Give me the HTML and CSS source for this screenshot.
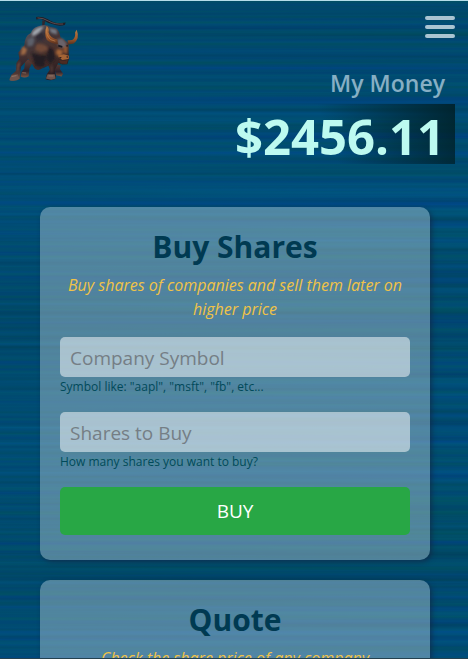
FILE: index.html
```html
<!DOCTYPE html>
<html lang="en">
<head>
  <meta charset="utf-8">
  <meta name="viewport" content="width=device-width, initial-scale=1">
  <title>My Money</title>
  <link rel="stylesheet" href="styles.css">
</head>
<body>
  <div class="page">
    <header class="topbar">
      <a class="logo" href="#" aria-label="Home">
        <svg viewBox="20 44 222 206" aria-hidden="true">
          <defs>
            <linearGradient id="hide" x1="0" y1="0" x2="0.5" y2="1">
              <stop offset="0" stop-color="#6b6f78"/>
              <stop offset="0.3" stop-color="#40373d"/>
              <stop offset="0.65" stop-color="#4c3129"/>
              <stop offset="1" stop-color="#241b22"/>
            </linearGradient>
            <linearGradient id="horn" x1="0" y1="0" x2="0" y2="1">
              <stop offset="0" stop-color="#b67a45"/>
              <stop offset="0.6" stop-color="#a0592b"/>
              <stop offset="1" stop-color="#57301f"/>
            </linearGradient>
            <linearGradient id="leg" x1="0" y1="0" x2="0" y2="1">
              <stop offset="0" stop-color="#5d3e35"/>
              <stop offset="0.65" stop-color="#2c222b"/>
              <stop offset="1" stop-color="#7d5641"/>
            </linearGradient>
            <filter id="soft"><feGaussianBlur stdDeviation="3"/></filter>
          </defs>
          <path d="M107 48Q126 46 143 55Q162 68 184 67L198 65L195 73Q178 79 158 71Q141 66 130 58Q120 53 107 56Z" fill="#211d25"/>
          <path d="M111 51Q129 51 145 61Q164 72 190 70" fill="none" stroke="#75666a" stroke-width="2"/>
          <path d="M126 58L135 61L132 75L125 78Z" fill="#30272e"/>
          <path d="M74 178L98 184L86 207L84 231Q72 238 59 232L62 216L70 208Z" fill="url(#leg)"/>
          <path d="M160 190L183 198L180 209L190 223L185 232L168 228Z" fill="url(#leg)"/>
          <path d="M73 132L90 145L90 170L60 202L56 239Q44 249 25 243L30 227L45 214L46 190L55 177L52 158Z" fill="url(#leg)"/>
          <path d="M73 119Q79 102 91 98Q95 83 112 78Q135 68 151 79Q172 80 178 96L182 111L207 129L207 158L209 175L203 194L188 195L175 190L165 210L168 238Q154 247 136 240L140 224L149 211L145 199L126 206Q113 216 103 208L93 190Q76 178 76 151Q67 134 73 119Z" fill="url(#hide)"/>
          <g filter="url(#soft)">
            <path d="M94 99Q106 80 130 78Q120 97 96 108Z" fill="#a2a7af"/>
            <path d="M146 82L170 87L171 102L153 97Z" fill="#747a84"/>
            <path d="M79 117L97 109L102 121L96 137L80 139Z" fill="#5c5f69"/>
            <path d="M107 104L122 94L135 110L123 121L109 119Z" fill="#2d2b34"/>
            <path d="M108 132Q126 128 140 139L144 150L121 158L103 149Z" fill="#6f4838"/>
            <path d="M92 157Q111 167 139 167L131 202L104 200Z" fill="#241b23"/>
            <path d="M145 141L161 149L165 178L149 194L137 176Z" fill="#241c24"/>
            <path d="M172 116L188 115L201 129L198 142L182 143L172 131Z" fill="#6a646b"/>
            <path d="M172 147L188 150L187 167L176 170L167 159Z" fill="#a16338"/>
            <path d="M191 141L204 138L202 163L191 158Z" fill="#915631"/>
            <path d="M64 139L79 147L73 163L59 166Z" fill="#9e6a46"/>
            <path d="M49 195L56 185L57 190L52 214L47 218Z" fill="#7c503c"/>
            <path d="M151 200L157 197L158 214L153 223Z" fill="#59413a"/>
          </g>
          <path d="M139 76Q148 82 145 95Q149 112 172 118L174 132Q151 130 140 119Q130 99 139 76Z" fill="url(#horn)"/>
          <path d="M232 88Q242 115 223 130L207 133L203 121L218 119Q229 112 227 95Z" fill="url(#horn)"/>
          <path d="M139 84Q137 105 151 118L166 123" fill="none" stroke="#c28551" stroke-width="2"/>
          <path d="M175 134L188 138L187 143L175 140ZM198 137L205 135L203 141Z" fill="#171820"/>
          <path d="M175 167L192 163L208 168L207 178L188 181L177 174Z" fill="#a46435"/>
          <path d="M177 171L186 173L181 177ZM199 171L206 169L203 175Z" fill="#24161a"/>
          <path d="M176 180Q190 187 205 180L201 193L183 192Z" fill="#4c2b23"/>
          <path d="M25 239L31 228L50 225L55 238Q42 246 25 243ZM137 238L142 225L164 225L167 238Q154 245 137 238Z" fill="#6e544c"/>
          <path d="M31 232L46 229M145 230L160 230M64 220L76 221" fill="none" stroke="#a4836f" stroke-width="2"/>
        </svg>
      </a>
      <button class="menu" type="button" aria-label="Menu">
        <span class="menu-line"></span>
        <span class="menu-line"></span>
        <span class="menu-line"></span>
      </button>
    </header>

    <section class="balance">
      <h1 class="balance-label">My Money</h1>
      <p class="balance-amount">$2456.11</p>
    </section>

    <main class="cards">
      <section class="card">
        <h2 class="card-title">Buy Shares</h2>
        <p class="card-text">Buy shares of companies and sell them later on higher price</p>
        <form>
          <div class="field">
            <input class="field-input" id="symbol" type="text" placeholder="Company Symbol">
            <label class="field-help" for="symbol">Symbol like: "aapl", "msft", "fb", etc...</label>
          </div>
          <div class="field">
            <input class="field-input" id="shares" type="text" placeholder="Shares to Buy">
            <label class="field-help" for="shares">How many shares you want to buy?</label>
          </div>
          <button class="submit" type="button">BUY</button>
        </form>
      </section>
      <section class="card">
        <h2 class="card-title">Quote</h2>
        <p class="card-text">Check the share price of any company</p>
      </section>
    </main>
  </div>
</body>
</html>
```

FILE: styles.css
```css
* {
  box-sizing: border-box;
}

body {
  margin: 0;
  font-family: "Segoe UI", "Open Sans", "Noto Sans", sans-serif;
  color: #003a52;
}

/* Brushed-metal backdrop: streaks of noise stretched along the x axis. */
.page {
  height: 100vh;
  overflow-y: auto;
  scrollbar-width: none;
  border-top: 1px solid #b4dcea;
  border-bottom: 1px solid #24414f;
  background-color: #004a70;
  background-image:
    url("data:image/svg+xml,%3Csvg xmlns='http://www.w3.org/2000/svg' width='1200' height='800'%3E%3Cfilter id='n' x='0' y='0' width='100%25' height='100%25' color-interpolation-filters='sRGB'%3E%3CfeTurbulence type='fractalNoise' baseFrequency='0.001 0.2' numOctaves='3' seed='8'/%3E%3CfeColorMatrix values='0 0 0 0 0 0.25 0 0 0 0.17 0 0.45 0 0 0.22 0 0 0 0 0.4'/%3E%3C/filter%3E%3Crect width='1200' height='800' filter='url(%23n)'/%3E%3C/svg%3E"),
    linear-gradient(#004560, #004a6e 12%, #004e7a 32%, #004665 48%, #004e76 68%, #004865 87%, #004d7b);
}

.topbar {
  display: flex;
  justify-content: space-between;
  align-items: flex-start;
  padding: 14px 13px 0 8px;
}

.logo {
  display: block;
  width: 72px;
  height: 68px;
}

.logo svg {
  display: block;
  width: 100%;
  height: 100%;
}

.menu {
  display: flex;
  flex-direction: column;
  gap: 5px;
  width: 30px;
  margin-top: 1px;
  padding: 0;
  border: 0;
  background: none;
}

.menu-line {
  width: 100%;
  height: 4px;
  border-radius: 2px;
  background: #a9c4d2;
}

.balance {
  display: flex;
  flex-direction: column;
  align-items: flex-end;
  margin-top: -15px;
  padding-right: 13px;
}

.balance-label {
  margin: 0;
  padding: 0 10px 5px;
  font-size: 23px;
  line-height: 31px;
  font-weight: 600;
  color: #87afc4;
}

.balance-amount {
  margin: 0;
  padding: 4px 10px 0;
  font-size: 49px;
  line-height: 56px;
  font-weight: 700;
  color: #bdfaf0;
  background: linear-gradient(70deg, transparent 45%, rgba(0, 30, 36, 0.85));
}

.cards {
  display: flex;
  flex-direction: column;
  gap: 20px;
  padding: 43px 38px 20px 40px;
}

.card {
  padding: 20px 20px 25px;
  border-radius: 10px;
  background: rgba(200, 220, 230, 0.4);
  box-shadow: 2px 2px 5px rgba(20, 35, 65, 0.6);
}

.card-title {
  margin: 0;
  font-size: 30px;
  line-height: 40px;
  font-weight: 700;
  text-align: center;
}

.card-text {
  margin: 6px 0 16px;
  font-size: 16px;
  line-height: 24px;
  font-style: italic;
  text-align: center;
  color: #f0c348;
}

.field {
  margin-bottom: 15px;
}

.field-input {
  display: block;
  width: 100%;
  height: 40px;
  padding: 2px 10px 0;
  border: 0;
  border-radius: 5px;
  background: rgba(255, 255, 255, 0.5);
  font-family: inherit;
  font-size: 19px;
  color: #003a52;
}

.field-input::placeholder {
  color: #757e85;
  opacity: 1;
}

.field-help {
  display: block;
  font-size: 12px;
  line-height: 20px;
  color: #004a5a;
}

.submit {
  display: block;
  width: 100%;
  height: 48px;
  padding: 0;
  border: 0;
  border-radius: 5px;
  background: #28a745;
  font-family: inherit;
  font-size: 19px;
  color: #fff;
}
```
